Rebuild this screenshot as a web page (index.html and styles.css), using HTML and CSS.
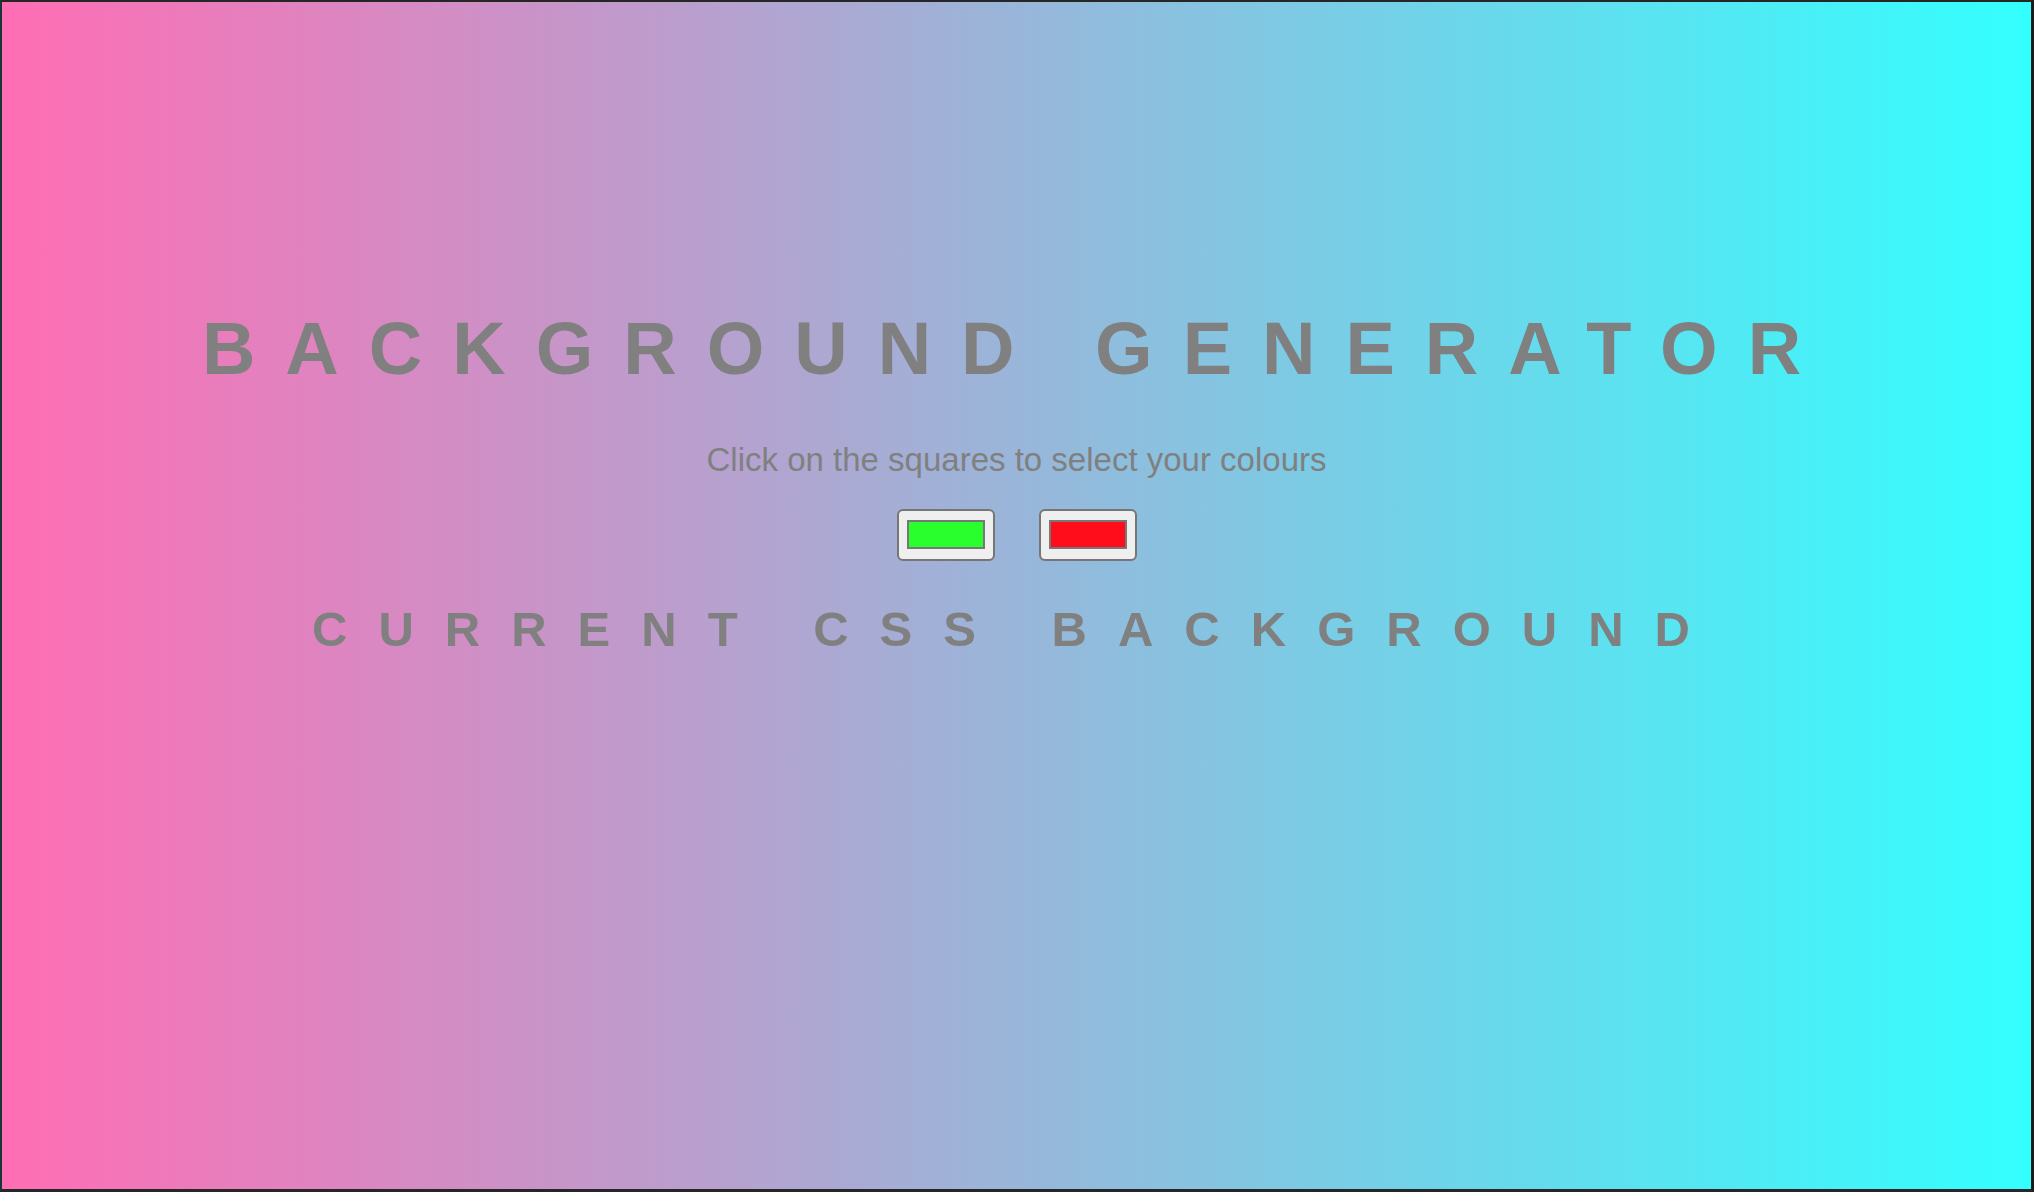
FILE: index.html
```html
<!DOCTYPE html>
<html>
<head>
  <title>Background Generator</title>
  <link rel="stylesheet" href="styles.css">
</head>
<body>
  <div class="frame">
    <h1>Background Generator</h1>
    <h3 class="hint">Click on the squares to select your colours</h3>
    <div class="pickers">
      <input class="color1" type="color" name="color1" value="#2aff2e">
      <input class="color2" type="color" name="color2" value="#ff0d1b">
    </div>
    <h2>Current CSS Background</h2>
  </div>
</body>
</html>
```

FILE: styles.css
```css
body {
  margin: 0;
  font-family: "Liberation Sans", Arial, sans-serif;
  color: grey;
  text-align: center;
}

.frame {
  box-sizing: border-box;
  min-height: 100vh;
  padding-top: 310px;
  border-top: 2px solid #262626;
  border-left: 2px solid #123838;
  border-right: 3px solid #1a1a1a;
  border-bottom: 3px solid #262626;
  background: linear-gradient(to right, #ff6db4, #33ffff);
}

h1, h2 {
  display: flex;
  justify-content: center;
  white-space: nowrap;
  line-height: 1;
  font-weight: bold;
  text-transform: uppercase;
}

h1 {
  margin: 0;
  font-size: 74px;
  letter-spacing: 30px;
}

.hint {
  margin: 57px 0 0;
  font-size: 33px;
  line-height: 1;
  font-weight: normal;
}

.pickers {
  display: flex;
  justify-content: center;
  gap: 44px;
  margin-top: 33px;
}

input[type="color"] {
  -webkit-appearance: none;
  box-sizing: border-box;
  width: 98px;
  height: 52px;
  padding: 9px 8px 10px;
  margin: 0;
  border: 2px solid #767676;
  border-radius: 6px;
  background-color: #efefef;
}

input[type="color"]::-webkit-color-swatch-wrapper {
  padding: 0;
}

input[type="color"]::-webkit-color-swatch {
  border: 2px solid #777;
  border-radius: 0;
}

h2 {
  margin: 44px 0 0;
  font-size: 49px;
  letter-spacing: 31px;
}
```
